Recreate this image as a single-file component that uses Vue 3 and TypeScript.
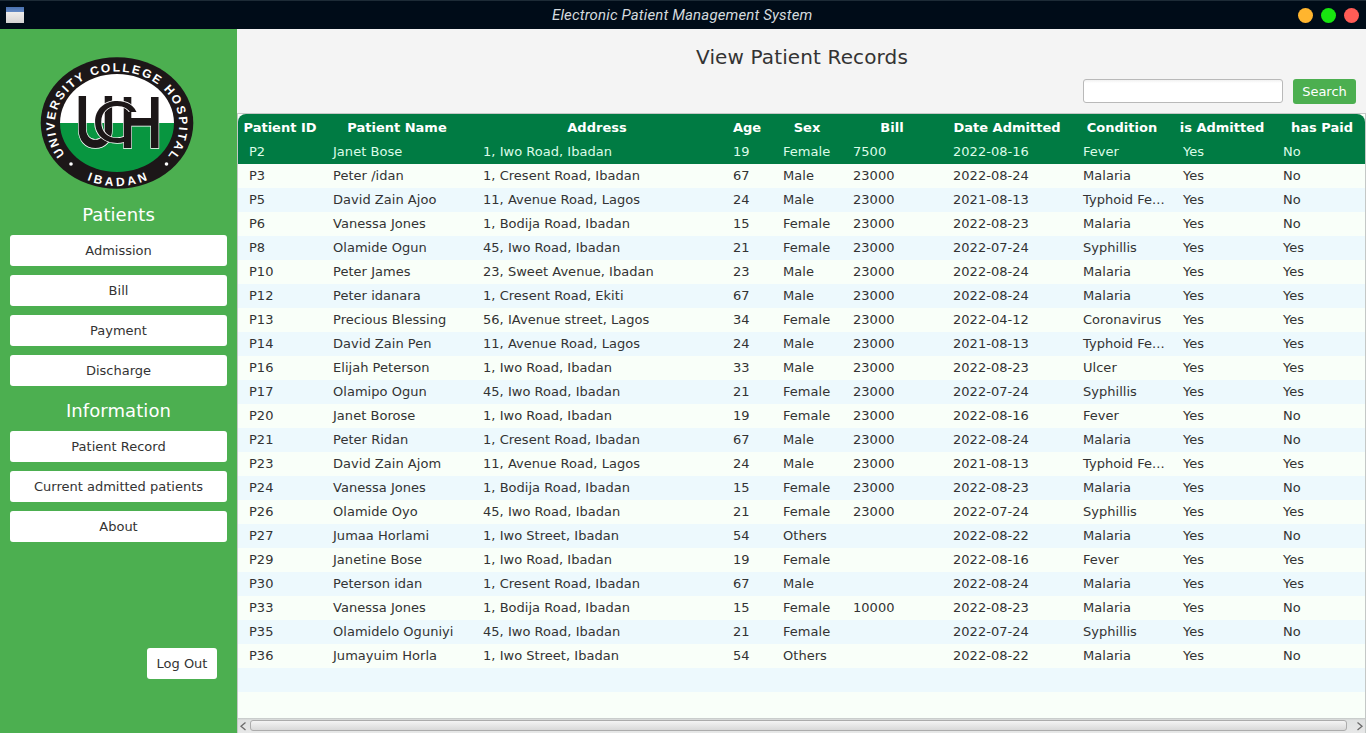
<script setup lang="ts">
interface Column {
  title: string
  width: number
}

const columns: Column[] = [
  { title: 'Patient ID', width: 84 },
  { title: 'Patient Name', width: 150 },
  { title: 'Address', width: 250 },
  { title: 'Age', width: 50 },
  { title: 'Sex', width: 70 },
  { title: 'Bill', width: 100 },
  { title: 'Date Admitted', width: 130 },
  { title: 'Condition', width: 100 },
  { title: 'is Admitted', width: 100 },
  { title: 'has Paid', width: 100 },
]
const template = columns.map((c) => c.width + 'px').join(' ')

const patients: string[][] = [
  ['P2', 'Janet Bose', '1, Iwo Road, Ibadan', '19', 'Female', '7500', '2022-08-16', 'Fever', 'Yes', 'No'],
  ['P3', 'Peter /idan', '1, Cresent Road, Ibadan', '67', 'Male', '23000', '2022-08-24', 'Malaria', 'Yes', 'No'],
  ['P5', 'David Zain Ajoo', '11, Avenue Road, Lagos', '24', 'Male', '23000', '2021-08-13', 'Typhoid Fe...', 'Yes', 'No'],
  ['P6', 'Vanessa Jones', '1, Bodija Road, Ibadan', '15', 'Female', '23000', '2022-08-23', 'Malaria', 'Yes', 'No'],
  ['P8', 'Olamide Ogun', '45, Iwo Road, Ibadan', '21', 'Female', '23000', '2022-07-24', 'Syphillis', 'Yes', 'Yes'],
  ['P10', 'Peter James', '23, Sweet Avenue, Ibadan', '23', 'Male', '23000', '2022-08-24', 'Malaria', 'Yes', 'Yes'],
  ['P12', 'Peter idanara', '1, Cresent Road, Ekiti', '67', 'Male', '23000', '2022-08-24', 'Malaria', 'Yes', 'Yes'],
  ['P13', 'Precious Blessing', '56, IAvenue street, Lagos', '34', 'Female', '23000', '2022-04-12', 'Coronavirus', 'Yes', 'Yes'],
  ['P14', 'David Zain Pen', '11, Avenue Road, Lagos', '24', 'Male', '23000', '2021-08-13', 'Typhoid Fe...', 'Yes', 'Yes'],
  ['P16', 'Elijah Peterson', '1, Iwo Road, Ibadan', '33', 'Male', '23000', '2022-08-23', 'Ulcer', 'Yes', 'Yes'],
  ['P17', 'Olamipo Ogun', '45, Iwo Road, Ibadan', '21', 'Female', '23000', '2022-07-24', 'Syphillis', 'Yes', 'Yes'],
  ['P20', 'Janet Borose', '1, Iwo Road, Ibadan', '19', 'Female', '23000', '2022-08-16', 'Fever', 'Yes', 'No'],
  ['P21', 'Peter Ridan', '1, Cresent Road, Ibadan', '67', 'Male', '23000', '2022-08-24', 'Malaria', 'Yes', 'No'],
  ['P23', 'David Zain Ajom', '11, Avenue Road, Lagos', '24', 'Male', '23000', '2021-08-13', 'Typhoid Fe...', 'Yes', 'Yes'],
  ['P24', 'Vanessa Jones', '1, Bodija Road, Ibadan', '15', 'Female', '23000', '2022-08-23', 'Malaria', 'Yes', 'No'],
  ['P26', 'Olamide Oyo', '45, Iwo Road, Ibadan', '21', 'Female', '23000', '2022-07-24', 'Syphillis', 'Yes', 'Yes'],
  ['P27', 'Jumaa Horlami', '1, Iwo Street, Ibadan', '54', 'Others', '', '2022-08-22', 'Malaria', 'Yes', 'No'],
  ['P29', 'Janetine Bose', '1, Iwo Road, Ibadan', '19', 'Female', '', '2022-08-16', 'Fever', 'Yes', 'Yes'],
  ['P30', 'Peterson idan', '1, Cresent Road, Ibadan', '67', 'Male', '', '2022-08-24', 'Malaria', 'Yes', 'Yes'],
  ['P33', 'Vanessa Jones', '1, Bodija Road, Ibadan', '15', 'Female', '10000', '2022-08-23', 'Malaria', 'Yes', 'No'],
  ['P35', 'Olamidelo Oguniyi', '45, Iwo Road, Ibadan', '21', 'Female', '', '2022-07-24', 'Syphillis', 'Yes', 'No'],
  ['P36', 'Jumayuim Horla', '1, Iwo Street, Ibadan', '54', 'Others', '', '2022-08-22', 'Malaria', 'Yes', 'No'],
  [],
  [],
]

const patientLinks: string[] = ['Admission', 'Bill', 'Payment', 'Discharge']
const infoLinks: string[] = ['Patient Record', 'Current admitted patients', 'About']
</script>

<template>
  <div class="window">
    <header class="titlebar">
      <span class="app-icon"></span>
      <span class="app-title">Electronic Patient Management System</span>
      <span class="controls">
        <i class="dot amber"></i>
        <i class="dot lime"></i>
        <i class="dot red"></i>
      </span>
    </header>

    <div class="body">
      <aside class="sidebar">
        <svg class="logo" width="156" height="136" viewBox="-78 -68 156 136">
          <defs>
            <path id="arc-top" d="M-52 31.5 A62.3 53.5 0 1 1 52 31.5" />
            <path id="arc-bottom" d="M-55 39.5 A70 61.5 0 0 0 55 39.5" />
            <clipPath id="c-visible">
              <path d="M-40 -40 H40 V-11 H7 V40 H-40 Z" />
            </clipPath>
          </defs>
          <ellipse rx="76.3" ry="65.8" fill="#1c1718" />
          <path d="M-57 0 A57 49 0 0 1 57 0 Z" fill="#fff" />
          <path d="M-57 0 A57 49 0 0 0 57 0 Z" fill="#089640" />
          <g class="monogram">
            <text transform="translate(-42.5 23.5) scale(.81 1)">U</text>
            <text transform="translate(2.5 24.5) scale(.83 1)">H</text>
            <g clip-path="url(#c-visible)">
              <text transform="translate(-26 20) scale(1.2 1)" class="thin">C</text>
            </g>
          </g>
          <g class="ring">
            <text><textPath href="#arc-top" textLength="247">UNIVERSITY COLLEGE HOSPITAL</textPath></text>
            <text text-anchor="middle"><textPath href="#arc-bottom" startOffset="51.5%" letter-spacing="3">IBADAN</textPath></text>
          </g>
          <circle cx="-46" cy="41" r="1.8" fill="#fff" />
          <circle cx="49.5" cy="41" r="1.8" fill="#fff" />
        </svg>

        <h2>Patients</h2>
        <nav>
          <button v-for="l in patientLinks" :key="l">{{ l }}</button>
        </nav>
        <h2>Information</h2>
        <nav>
          <button v-for="l in infoLinks" :key="l">{{ l }}</button>
        </nav>
        <button class="logout">Log Out</button>
      </aside>

      <main>
        <h1>View Patient Records</h1>
        <div class="search">
          <input type="text" aria-label="Search" />
          <button>Search</button>
        </div>

        <section class="table">
          <div class="head" :style="{ gridTemplateColumns: template }">
            <span v-for="c in columns" :key="c.title">{{ c.title }}</span>
          </div>
          <div
            v-for="(row, i) in patients"
            :key="i"
            class="row"
            :class="{ selected: i === 0 }"
            :style="{ gridTemplateColumns: template }"
          >
            <span v-for="(cell, j) in row" :key="j">{{ cell }}</span>
          </div>
          <div class="filler"></div>
          <div class="scrollbar">
            <svg width="12" height="14" viewBox="0 0 12 14"><path d="M7.5 3.5 L3 7.3 L7.5 11" /></svg>
            <div class="thumb"></div>
            <svg width="18" height="14" viewBox="0 0 18 14"><path d="M10.5 3.5 L15 7.3 L10.5 11" /></svg>
          </div>
        </section>
      </main>
    </div>
  </div>
</template>

<style>
body {
  margin: 0;
  overflow: hidden;
}
</style>

<style scoped>
.window {
  width: 1366px;
  height: 733px;
  display: flex;
  flex-direction: column;
  overflow: hidden;
  font: 13px 'DejaVu Sans', sans-serif;
  color: #333;
}
.titlebar {
  height: 29px;
  box-sizing: border-box;
  border-top: 1px solid #1d2b36;
  background: #000c18;
  display: grid;
  grid-template-columns: 1fr auto 1fr;
  align-items: center;
}
.app-icon {
  width: 18px;
  height: 16px;
  margin-left: 6px;
  background: linear-gradient(#4a72b0 0, #6489c4 5px, #f0eeec 5px, #d5d3d3 100%);
}
.app-title {
  font: italic 15px Roboto, sans-serif;
  letter-spacing: 0.15px;
  color: #d4dade;
  width: 262px;
  white-space: nowrap;
}
.controls {
  display: flex;
  justify-content: flex-end;
  gap: 8px;
  padding-right: 7px;
}
.dot {
  width: 15px;
  height: 15px;
  border-radius: 50%;
}
.amber { background: #ffb52e; }
.lime { background: #18e610; }
.red { background: #ff5c56; }

.body {
  flex: 1;
  display: flex;
  min-height: 0;
}
.sidebar {
  width: 237px;
  box-sizing: border-box;
  padding: 26px 10px 0;
  background: #4caf50;
  display: flex;
  flex-direction: column;
}
.logo {
  display: block;
  margin-left: 29px;
}
.monogram {
  font: 600 70px Inter, sans-serif;
  fill: #1c1718;
  stroke: #fff;
  stroke-width: 1.4px;
  paint-order: stroke;
}
.monogram .thin {
  font-weight: 400;
  font-size: 57px;
}
.ring {
  font: bold 12px 'Liberation Sans', sans-serif;
  fill: #fff;
}
h2 {
  margin: 12px 0 8px;
  height: 24px;
  font-size: 18px;
  letter-spacing: 0.08px;
  font-weight: normal;
  line-height: 24px;
  text-align: center;
  color: #fff;
}
nav {
  display: flex;
  flex-direction: column;
  gap: 9px;
}
button {
  height: 31px;
  padding: 0;
  border: 0;
  border-radius: 3px;
  background: #fff;
  font: inherit;
  color: #333;
}
h2 + nav + h2 {
  margin-top: 13px;
}
.logout {
  align-self: flex-end;
  width: 70px;
  margin: 106px 10px 0 0;
}

main {
  flex: 1;
  min-width: 0;
  display: flex;
  flex-direction: column;
  background: #f4f4f4;
}
h1 {
  margin: 16px 0 10px 1px;
  height: 24px;
  line-height: 24px;
  font-size: 20px;
  letter-spacing: 0.13px;
  font-weight: normal;
  text-align: center;
}
.search {
  display: flex;
  justify-content: flex-end;
  gap: 10px;
  height: 34px;
  padding-right: 10px;
}
input {
  width: 200px;
  height: 24px;
  box-sizing: border-box;
  border: 1px solid #b9b9b9;
  border-radius: 3px;
  background: linear-gradient(#f1f1f1, #fff 3px);
}
.search button {
  width: 63px;
  height: 25px;
  background: #4caf50;
  color: #fff;
}
.table {
  flex: 1;
  min-height: 0;
  display: flex;
  flex-direction: column;
  border: 1px solid #c4c8c6;
  border-bottom: 0;
  background: #f9fff9;
  overflow: hidden;
}
.head,
.row {
  display: grid;
  flex: none;
  height: 24px;
  line-height: 24px;
  white-space: nowrap;
}
.head {
  height: 26px;
  line-height: 27px;
  font-weight: bold;
  text-align: center;
  border-radius: 8px 8px 0 0;
  background: #007b43;
  color: #fff;
}
.row span {
  padding-left: 11px;
  letter-spacing: 0.03px;
}
.row:nth-child(even) {
  background: #edf9fd;
}
.row:nth-child(odd) {
  background: #f9fff9;
}
.row.selected {
  background: #007b43;
  color: #dcfbe8;
}
.filler {
  flex: 1;
}
.scrollbar {
  height: 15px;
  display: flex;
  align-items: center;
  background: linear-gradient(#c3c7c6 0, #dfe1e1 2px, #e7e8e8 100%);
}
.scrollbar path {
  fill: none;
  stroke: #6b6b6b;
  stroke-width: 1.3;
}
.thumb {
  flex: 1;
  height: 11px;
  box-sizing: border-box;
  border: 1px solid #acacac;
  border-radius: 3px;
  background: linear-gradient(#f4f4f4, #d9d9d9);
}
</style>
